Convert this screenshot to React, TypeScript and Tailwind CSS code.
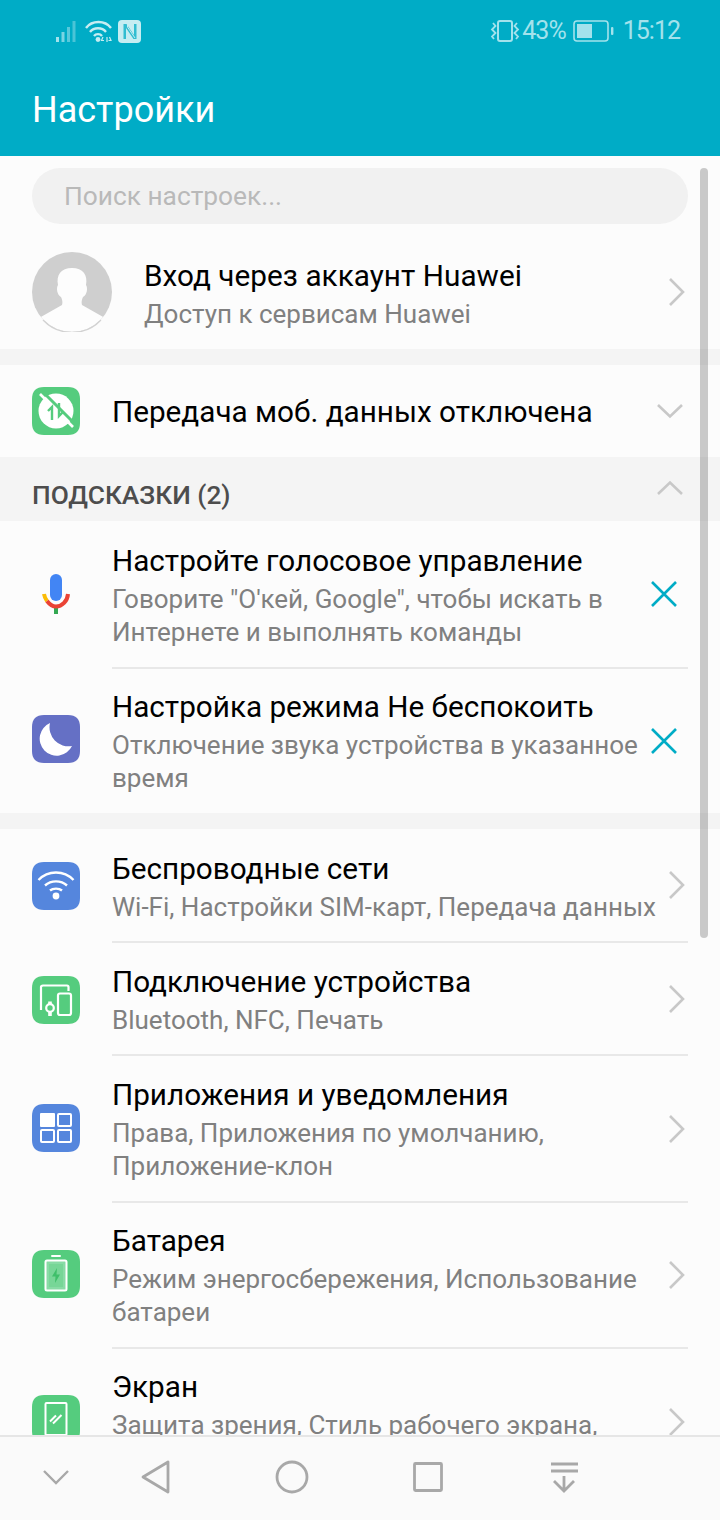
const FONT = "font-['Roboto',sans-serif]";

function Box({ color, children }: { color: string; children: React.ReactNode }) {
  return (
    <svg width="48" height="48" viewBox="0 0 48 48" className="shrink-0">
      <path d="M12 0H36C44 0 48 4 48 12V36C48 44 44 48 36 48H12C4 48 0 44 0 36V12C0 4 4 0 12 0Z" fill={color} />
      {children}
    </svg>
  );
}

const GREEN = "#55cc7e";

const NoData = () => (
  <Box color={GREEN}>
    <circle cx="24" cy="24" r="17.5" fill="#fff" />
    <path d="M11 5L44 38" stroke={GREEN} strokeWidth="3" />
    <path d="M8 7L41 40" stroke="#fff" strokeWidth="2.6" />
    <path d="M20 33V20L16 24" stroke={GREEN} strokeWidth="2.4" fill="none" />
    <path d="M27 16V29L31 25" stroke={GREEN} strokeWidth="2.4" fill="none" />
  </Box>
);

const Mic = () => (
  <svg width="48" height="48" viewBox="0 0 48 48" className="shrink-0">
    <rect x="18" y="5" width="12" height="27" rx="6" fill="#4285f4" />
    <rect x="22" y="37" width="4" height="8" fill="#34a853" />
    <path d="M12 25C12.5 28 13.5 30 15 32" stroke="#fbbc05" strokeWidth="4" fill="none" />
    <path d="M15 32C18 36 21 37.5 24 37.5C30 37.5 35.5 32 36 25" stroke="#ea4335" strokeWidth="4" fill="none" />
  </svg>
);

const Moon = () => (
  <Box color="#6570c5">
    <path d="M18 8A17 17 0 1 0 40 31A19 19 0 0 1 18 8Z" fill="#fff" />
  </Box>
);

const WifiIcon = () => (
  <Box color="#5586dd">
    <circle cx="24" cy="34" r="3.4" fill="#fff" />
    <g stroke="#fff" strokeWidth="2.4" fill="none">
      <path d="M6.5 18C16 8 32 8 41.5 18" />
      <path d="M13 23.5C19 18 29 18 35 23.5" />
      <path d="M18 28.5C21 26 27 26 30 28.5" />
    </g>
  </Box>
);

const Connect = () => (
  <Box color={GREEN}>
    <g stroke="#fff" strokeWidth="2.2" fill="none">
      <path d="M9 34V11C9 10 10 9.5 11 9.5H35C36 9.5 36.5 10 36.5 11V15" />
      <rect x="26" y="17.5" width="13" height="21.5" rx="2" />
      <circle cx="18" cy="32" r="3.8" />
      <path d="M18 25.5V28.5M18 35.5V40" strokeWidth="3.6" />
    </g>
  </Box>
);

const Apps = () => (
  <Box color="#5586dd">
    <rect x="8" y="9" width="15" height="14" rx="1" fill="#fff" />
    <g stroke="#fff" strokeWidth="2" fill="none">
      <rect x="26" y="10" width="13" height="12" rx="1" />
      <rect x="9" y="26" width="13" height="12" rx="1" />
      <rect x="26" y="26" width="13" height="12" rx="1" />
    </g>
  </Box>
);

const Battery = () => (
  <Box color={GREEN}>
    <rect x="19" y="5" width="10" height="2" rx="1" fill="#fff" />
    <rect x="13.5" y="10.5" width="21" height="30" rx="1.5" fill="#fff" fillOpacity="0.3" stroke="#fff" strokeWidth="2" />
    <rect x="17" y="14" width="14" height="23" fill={GREEN} />
    <rect x="17" y="14" width="14" height="23" fill="#fff" fillOpacity="0.2" />
    <path d="M25 18L20 26.5H23.5L23 33L28 24.5H24.5Z" fill="#3fbf6a" />
  </Box>
);

const Screen = () => (
  <Box color={GREEN}>
    <rect x="13.5" y="8" width="21" height="32" rx="1" stroke="#fff" strokeWidth="2" fill="none" />
    <path d="M18 26.5L24 20.5M21 28.5L29.5 20" stroke="#fff" strokeWidth="2" fill="none" />
  </Box>
);

const Chevron = () => (
  <svg width="20" height="30" viewBox="0 0 20 30" className="shrink-0 ml-[16px]">
    <path d="M2 2L15 15L2 28" stroke="#c8c8c8" strokeWidth="2.6" fill="none" />
  </svg>
);

const Close = () => (
  <svg width="28" height="28" viewBox="0 0 28 28" className="shrink-0 mr-[10px]">
    <path d="M2 2L26 26M26 2L2 26" stroke="#00acc6" strokeWidth="2.6" fill="none" />
  </svg>
);

function Row({
  icon, title, sub, h, trailing, border = true, pt, iconShift = "",
}: {
  icon: React.ReactNode; title: string; sub: string[]; h: string; trailing: React.ReactNode; border?: boolean; pt: string; iconShift?: string;
}) {
  return (
    <div className={`flex ${h} pl-8 pr-8 items-center`}>
      <div className={`w-20 shrink-0 ${iconShift}`}>{icon}</div>
      <div className={`flex flex-1 min-w-0 self-stretch items-center ${border ? "border-b-2 border-[#e8e8e8]" : ""}`}>
        <div className={`flex-1 self-start min-w-0 ${pt}`}>
          <div className="text-[29.7px] leading-[38px] mb-[3px] text-black">{title}</div>
          {sub.map((s) => (
            <div key={s} className="text-[26px] leading-[33px] text-[#808080] whitespace-nowrap">{s}</div>
          ))}
        </div>
        <div className="w-[38px] shrink-0 flex justify-end">{trailing}</div>
      </div>
    </div>
  );
}

export default function App() {
  return (
    <div className={`${FONT} relative w-[720px] h-[1520px] overflow-hidden flex flex-col bg-[#fcfcfc]`}>
      <header className="h-[156px] shrink-0 bg-[#00acc6] flex flex-col px-8">
        <div className="flex items-center h-[62px] text-[#a3e2ec] text-[25px] tracking-[-1px]">
          <svg width="110" height="24" viewBox="0 0 110 24" className="ml-6 shrink-0">
            <g fill="#a3e2ec">
              <rect x="0" y="18" width="3" height="5" />
              <rect x="5.5" y="13" width="3" height="10" opacity=".75" />
              <rect x="11" y="8" width="3" height="15" opacity=".55" />
              <rect x="16.5" y="2" width="3" height="21" opacity=".45" />
            </g>
            <g stroke="#c6edf2" strokeWidth="2.4" fill="none">
              <path d="M30 9C36 1 49 1 55 9" />
              <path d="M34 13C38 8 46 8 50 13" />
              <path d="M38 17C40 14.5 44 14.5 46 17" />
            </g>
            <circle cx="42" cy="20.5" r="2.4" fill="#c6edf2" />
            <path d="M47 18L45.5 21.5H48M51 18V23M53.5 18L55 21.5H52.5" stroke="#c6edf2" strokeWidth="1.2" fill="none" />
            <rect x="62" y="1" width="23" height="23" rx="4" fill="#c6edf2" />
            <path d="M67.5 5H70.5L78 16V5H80.5V20H77.5L70 9V20H67.5Z" fill="#00acc6" fillOpacity="0.75" />
            <path d="M71.5 4.5V8L79 19" stroke="#c6edf2" strokeWidth="1" fill="none" />
          </svg>
          <div className="flex-1" />
          <svg width="30" height="24" viewBox="0 0 30 24" className="shrink-0 mr-[2px]">
            <rect x="8" y="2" width="14" height="20" rx="2" stroke="#a3e2ec" strokeWidth="2" fill="none" />
            <path d="M3 4L5.5 7L2 10.5L5.5 14L2 17.5L4 20M27 4L24.5 7L28 10.5L24.5 14L28 17.5L26 20" stroke="#a3e2ec" strokeWidth="1.8" fill="none" />
          </svg>
          <span>43%</span>
          <svg width="42" height="22" viewBox="0 0 42 22" className="shrink-0 ml-[7px]">
            <rect x="1" y="1" width="34" height="20" rx="3" stroke="#a3e2ec" strokeWidth="1.6" fill="none" />
            <rect x="4" y="4" width="15" height="14" fill="#a3e2ec" />
            <rect x="38" y="7" width="2.4" height="8" rx="1" fill="#a3e2ec" />
          </svg>
          <span className="ml-2 mr-2">15:12</span>
        </div>
        <div className="mt-6 text-[36px] leading-[48px] text-white">Настройки</div>
      </header>

      <main className="flex-1 min-h-0 overflow-hidden">
        <div className="px-8 pt-3">
          <div className="h-14 rounded-[28px] bg-[#f1f1f1] flex items-center px-8 pt-[2px] text-[26.3px] text-[#b9b9b9]">
            Поиск настроек...
          </div>
        </div>

        <div className="flex items-center h-[125px] pl-8 pr-8 pt-[10px]">
          <svg width="80" height="80" viewBox="0 0 80 80" className="shrink-0">
            <defs>
              <clipPath id="avatar"><circle cx="40" cy="40" r="40" /></clipPath>
            </defs>
            <circle cx="40" cy="40" r="40" fill="#cfcfcf" />
            <g clipPath="url(#avatar)">
              <path d="M0 70L30 53C31 50 30 47 29 45C25 43 24 36 26 33C24 23 29 16 40 16C51 16 56 23 54 33C56 36 55 43 51 45C50 47 49 50 50 53L80 70V80H0Z" fill="#fdfdfd" />
            </g>
            <path d="M11 68A40 40 0 0 0 69 68" stroke="#d2d2d2" strokeWidth="1.2" fill="none" />
          </svg>
          <div className="ml-8 flex-1 pt-[5px]">
            <div className="text-[29.7px] leading-[38px] tracking-[0.05px] mb-[3px] text-black">Вход через аккаунт Huawei</div>
            <div className="text-[26px] leading-[33px] text-[#808080]">Доступ к сервисам Huawei</div>
          </div>
          <div className="w-[38px] flex justify-end"><Chevron /></div>
        </div>

        <div className="h-4 bg-[#f4f4f4]" />

        <div className="flex items-center h-[92px] pl-8 pr-8">
          <div className="w-20 shrink-0"><NoData /></div>
          <div className="flex-1 text-[29.7px] pt-[2px] text-black">Передача моб. данных отключена</div>
          <svg width="28" height="16" viewBox="0 0 28 16" className="mr-[4px]">
            <path d="M2 2L14 13.5L26 2" stroke="#c8c8c8" strokeWidth="2.6" fill="none" />
          </svg>
        </div>

        <div className="flex items-center h-16 bg-[#f4f4f4] pl-8 pr-8">
          <div className="flex-1 text-[26.3px] font-medium text-[#4d4d4d] pt-[14px]">ПОДСКАЗКИ (2)</div>
          <svg width="28" height="16" viewBox="0 0 28 16" className="mr-[4px] mb-[2px]">
            <path d="M2 14L14 2.5L26 14" stroke="#c8c8c8" strokeWidth="2.6" fill="none" />
          </svg>
        </div>

        <Row icon={<Mic />} title="Настройте голосовое управление" sub={['Говорите "О\'кей, Google", чтобы искать в', "Интернете и выполнять команды"]} h="h-[148px]" pt="pt-[21px]" iconShift="mb-[4px]" trailing={<Close />} />
        <Row icon={<Moon />} title="Настройка режима Не беспокоить" sub={["Отключение звука устройства в указанное", "время"]} h="h-[144px]" pt="pt-[19px]" iconShift="mb-[4px]" border={false} trailing={<Close />} />

        <div className="h-4 bg-[#f4f4f4]" />

        <Row icon={<WifiIcon />} title="Беспроводные сети" sub={["Wi-Fi, Настройки SIM-карт, Передача данных"]} h="h-[114px]" pt="pt-[21px]" trailing={<Chevron />} />
        <Row icon={<Connect />} title="Подключение устройства" sub={["Bluetooth, NFC, Печать"]} h="h-[113px]" pt="pt-[20px]" trailing={<Chevron />} />
        <Row icon={<Apps />} title="Приложения и уведомления" sub={["Права, Приложения по умолчанию,", "Приложение-клон"]} h="h-[147px]" pt="pt-[20px]" iconShift="mb-[4px]" trailing={<Chevron />} />
        <Row icon={<Battery />} title="Батарея" sub={["Режим энергосбережения, Использование", "батареи"]} h="h-[146px]" pt="pt-[19px]" iconShift="mb-[4px]" trailing={<Chevron />} />
        <Row icon={<Screen />} title="Экран" sub={["Защита зрения, Стиль рабочего экрана,"]} h="h-[146px]" pt="pt-[19px]" iconShift="mb-[6px]" border={false} trailing={<Chevron />} />
      </main>

      <nav className="h-[85px] shrink-0 bg-[#fafafa] border-t-2 border-[#e6e6e6] flex items-center relative">
        <svg width="720" height="83" viewBox="0 1437 720 83" className="shrink-0">
          <g stroke="#a8a8a8" fill="none">
            <path d="M44 1471L56 1483L68 1471" strokeWidth="2.4" />
            <path d="M168 1462V1492L143 1477Z" strokeWidth="2.8" strokeLinejoin="round" />
            <circle cx="292" cy="1477" r="15" strokeWidth="2.8" />
            <rect x="414.5" y="1463.5" width="27" height="27" rx="1" strokeWidth="2.8" />
            <path d="M551 1464H578M551 1471H578M564 1476V1491M554 1481L564 1491L574 1481" strokeWidth="2.8" />
          </g>
        </svg>
      </nav>

      <div className="absolute left-[700px] top-[168px] w-2 h-[770px] rounded-full bg-black/20" />
    </div>
  );
}
